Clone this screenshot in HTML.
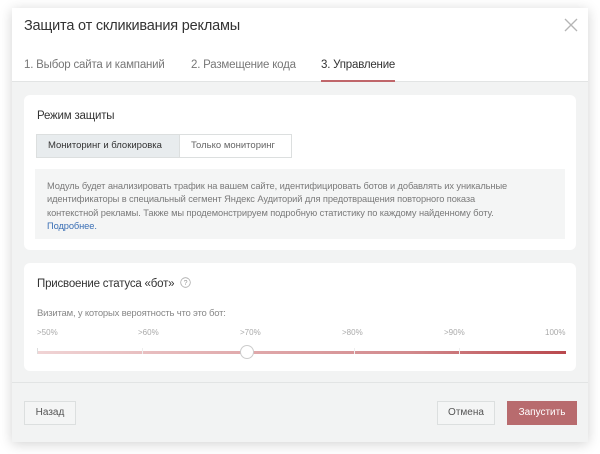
<!DOCTYPE html>
<html><head><meta charset="utf-8"><style>
*{box-sizing:border-box;margin:0;padding:0}
body{width:600px;height:454px;background:#fff;font-family:"Liberation Sans",sans-serif;position:relative;overflow:hidden}
.modal{position:absolute;left:12px;top:8px;width:576px;height:434px;background:#f2f3f3;box-shadow:0 2px 12px rgba(0,0,0,.18)}
.head{position:absolute;left:0;top:0;width:576px;height:74px;background:#fff;border-bottom:1px solid #e2e4e4}
.title{position:absolute;left:12px;top:10px;font-size:14.5px;color:#333;letter-spacing:-.2px}
.close{position:absolute;left:552px;top:10px}
.tab{position:absolute;top:51px;font-size:11.5px;color:#777;white-space:nowrap;letter-spacing:-.2px}
.tab.act{color:#333}
.ul{position:absolute;left:309px;top:72px;width:74px;height:2px;background:#c0666a}
.card{position:absolute;left:12px;width:552px;background:#fff;border-radius:6px}
.h{position:absolute;left:13px;font-size:11.5px;color:#333;letter-spacing:-.2px;white-space:nowrap}
.seg{position:absolute;left:12px;top:39px;height:24px;display:flex;border:1px solid #dcdfdf;font-size:9.5px;color:#333}
.seg div{padding:0 11px;line-height:22px;white-space:nowrap}
.info{position:absolute;left:11px;top:74px;width:530px;height:70px;background:#f4f5f5;padding:11px 12px;font-size:9.3px;line-height:13.3px;color:#7a7a7a;white-space:nowrap;letter-spacing:-.1px}
.info a{color:#3a6fb5;text-decoration:none}
.btn{position:absolute;top:393px;height:24px;border:1px solid #dcdfdf;background:#f4f5f5;font-size:10px;color:#555;line-height:22px;text-align:center}
.lbl{position:absolute;top:65px;font-size:8px;color:#aaa}
</style></head><body>
<div class="modal">
 <div class="head">
  <div class="title">Защита от скликивания рекламы</div>
  <svg class="close" width="14" height="14" viewBox="0 0 14 14"><path d="M1 1L13 13M13 1L1 13" stroke="#b5b5b5" stroke-width="1.3"/></svg>
  <div class="tab" style="left:12px">1. Выбор сайта и кампаний</div>
  <div class="tab" style="left:179px">2. Размещение кода</div>
  <div class="tab act" style="left:309px">3. Управление</div>
  <div class="ul"></div>
 </div>
 <div class="card" style="top:87px;height:155px">
  <div class="h" style="top:15px">Режим защиты</div>
  <div class="seg"><div style="background:#e8ecee;border-right:1px solid #dcdfdf;width:143px">Мониторинг и блокировка</div><div style="width:111px;color:#666">Только мониторинг</div></div>
  <div class="info">Модуль будет анализировать трафик на вашем сайте, идентифицировать ботов и добавлять их уникальные<br>идентификаторы в специальный сегмент Яндекс Аудиторий для предотвращения повторного показа<br>контекстной рекламы. Также мы продемонстрируем подробную статистику по каждому найденному боту.<br><a>Подробнее.</a></div>
 </div>
 <div class="card" style="top:255px;height:108px">
  <div class="h" style="top:14px">Присвоение статуса «бот» <svg width="11" height="11" viewBox="0 0 11 11" style="vertical-align:-1px;margin-left:3px"><circle cx="5.5" cy="5.5" r="4.8" fill="none" stroke="#aaa" stroke-width=".8"/><text x="5.5" y="8" font-size="7" text-anchor="middle" fill="#999" font-family="Liberation Sans">?</text></svg></div>
  <div class="h" style="top:45px;font-size:9.5px;color:#888">Визитам, у которых вероятность что это бот:</div>
  <div class="lbl" style="left:13px">&gt;50%</div>
  <div class="lbl" style="left:114px">&gt;60%</div>
  <div class="lbl" style="left:216px">&gt;70%</div>
  <div class="lbl" style="left:318px">&gt;80%</div>
  <div class="lbl" style="left:420px">&gt;90%</div>
  <div class="lbl" style="left:521px">100%</div>
  <div style="position:absolute;left:13px;top:88px;width:529px;height:3px;background:linear-gradient(90deg,#f0d4d5,#e0a9ab 40%,#d28a8d 70%,#b9484d)"></div>
  <div style="position:absolute;left:13px;top:85px;width:1px;height:6px;background:#ddd"></div>
  <div style="position:absolute;left:118px;top:85px;width:1px;height:6px;background:#eee"></div>
  <div style="position:absolute;left:330px;top:85px;width:1px;height:6px;background:#eee"></div>
  <div style="position:absolute;left:435px;top:85px;width:1px;height:6px;background:#eee"></div>
  <div style="position:absolute;left:216px;top:82px;width:14px;height:14px;border-radius:50%;background:#fff;border:1px solid #ccc"></div>
 </div>
 <div style="position:absolute;left:0;top:374px;width:576px;height:1px;background:#e2e4e4"></div>
 <div class="btn" style="left:12px;width:52px">Назад</div>
 <div class="btn" style="left:425px;width:58px">Отмена</div>
 <div class="btn" style="left:495px;width:70px;background:#b86b6e;border-color:#b86b6e;color:#fff">Запустить</div>
</div>
</body></html>
